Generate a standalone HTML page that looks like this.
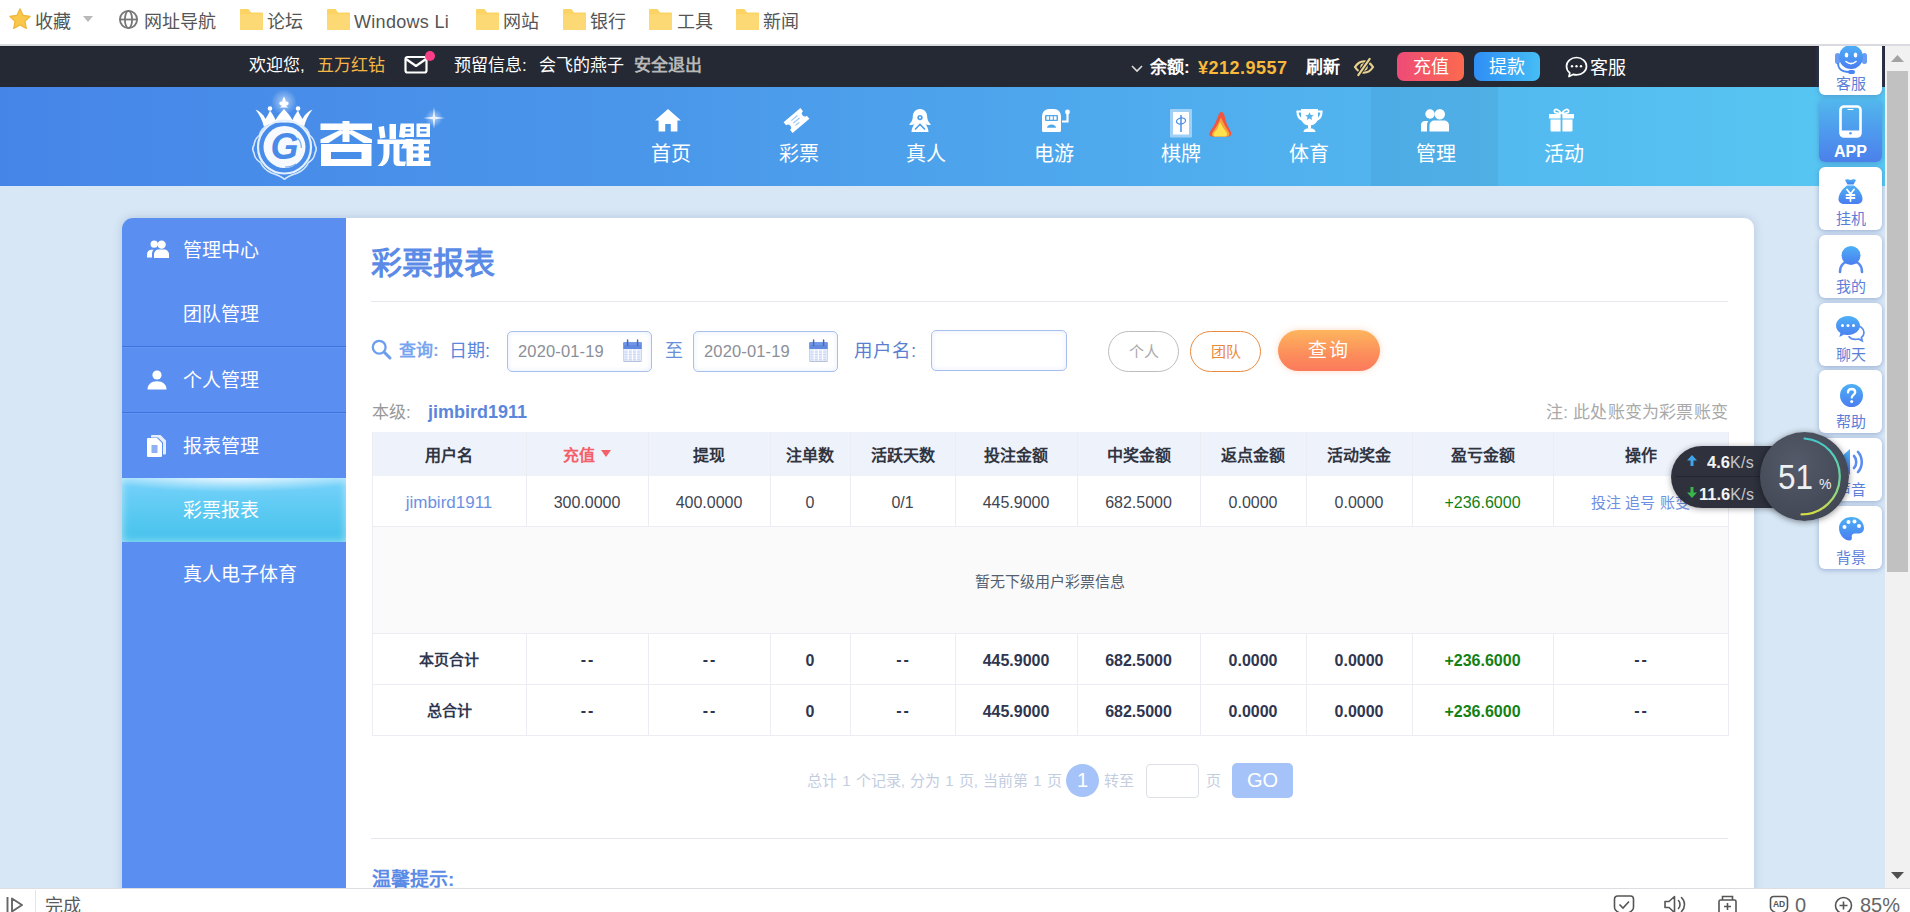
<!DOCTYPE html>
<html lang="zh-CN">
<head>
<meta charset="utf-8">
<title>彩票报表</title>
<style>
*{box-sizing:border-box;margin:0;padding:0}
html,body{width:1910px;height:912px;overflow:hidden;background:#fff}
body{position:relative;font-family:"Liberation Sans",sans-serif;color:#333;font-size:16px}
.a{position:absolute;white-space:nowrap;line-height:1}
svg{display:block;overflow:visible}
/* bookmark bar */
#bm{position:absolute;left:0;top:0;width:1910px;height:44px;background:#fff}
#bm .t{position:absolute;top:12px;font-size:18px;color:#555;line-height:20px;white-space:nowrap}
#bmline{position:absolute;left:0;top:44px;width:1910px;height:2px;background:#d9dbe0}
.fold{position:absolute;top:8px;width:23px;height:22px}
/* top dark bar */
#top{position:absolute;left:0;top:46px;width:1885px;height:41px;background:#252934;box-shadow:inset 0 1px 0 #1f212b}
#top .t{position:absolute;top:10px;font-size:17px;line-height:20px;color:#fff;white-space:nowrap}
/* header */
#hd{position:absolute;left:0;top:87px;width:1885px;height:99px;background:linear-gradient(90deg,#4685e8 0%,#4a97ea 35%,#51b2ee 70%,#57c8f2 100%)}
.nv{position:absolute;top:0;width:127px;height:99px;text-align:center}
.nv span{position:absolute;left:0;right:0;top:56px;font-size:20px;line-height:22px;color:#fff}
.nv svg{position:absolute;left:50%;top:20px;margin-left:-15px}
/* page */
#pg{position:absolute;left:0;top:186px;width:1885px;height:702px;background:#d7e7f5;overflow:hidden}
#side{position:absolute;left:122px;top:32px;width:224px;height:680px;background:#5b8ef1;border-radius:11px 0 0 0}
#side .t{position:absolute;left:61px;font-size:19px;line-height:22px;color:#fff;white-space:nowrap}
#side .ln{position:absolute;left:0;width:224px;height:1px;background:#3f70dc;box-shadow:0 1px 0 rgba(110,160,250,.5)}
#main{position:absolute;left:346px;top:32px;width:1408px;height:680px;background:#fff;border-radius:0 10px 0 0}
/* scrollbar */
#sb{position:absolute;left:1885px;top:46px;width:25px;height:842px;background:#f1f1f1}
#sb .th{position:absolute;left:2px;top:25px;width:21px;height:501px;background:#c1c1c1}
/* status bar */
#st{position:absolute;left:0;top:888px;width:1910px;height:24px;background:#fff;border-top:1px solid #dcdde0;overflow:hidden}

#act{background:radial-gradient(ellipse 60% 14px at 50% 0,rgba(255,255,255,.75),rgba(255,255,255,0) 100%),linear-gradient(180deg,#79d2fb 0%,#5fcbf3 45%,#45c2eb 100%);box-shadow:inset 0 0 8px rgba(255,255,255,.55)}
.inp{position:absolute;border:1px solid #a9bfec;border-radius:5px;background:#fff;box-shadow:inset 0 0 5px rgba(130,165,240,.22)}
.inp span{position:absolute;left:10px;top:10px;letter-spacing:.15px;font-size:16.500px;line-height:18px;color:#8b8f98}
.cal{position:absolute;left:115px;top:8px}
.pill{position:absolute;width:71px;height:41px;border:1px solid;border-radius:21px;font-size:15px;line-height:39px;text-align:center;background:#fff}
#qbtn{border-radius:21px;background:linear-gradient(180deg,#fdb55d 0%,#fc8d5b 60%,#fb7a5c 100%);color:#fff;font-size:19px;line-height:41px;text-align:center;letter-spacing:2px;text-indent:0;box-shadow:0 0 6px rgba(252,150,90,.35)}
.c{position:absolute;text-align:center;white-space:nowrap;font-size:16px;color:#3f4450;padding-top:2px}
.c.th{font-weight:bold;font-size:16px;color:#30343f;padding-top:2px}
.c.th.red{color:#f4606a}
.c.ts{font-weight:bold;font-size:16px;color:#2f3650}
.c.ts.cj{font-size:15px;padding-top:1px}
.dd{letter-spacing:2px;margin-right:-2px;position:relative;top:-1px}
.c.em{font-size:15px;color:#555e6e}
.tri{display:inline-block;width:0;height:0;border-left:5px solid transparent;border-right:5px solid transparent;border-top:7px solid #f4606a;margin-left:6px;vertical-align:4px}
.lk{color:#6d90e2;font-size:17px}
.lk2{color:#6d90e2;font-size:15px}
.gr{color:#138113}
.gl{position:absolute;background:#ebedf2}

#fp{position:absolute;left:1819px;top:46px;width:66px;height:540px;overflow:hidden}
#fp{left:1813px;width:76px;padding:0}
.fi{position:absolute;left:6px;width:63px;height:63px;border-radius:6px;background:#fff;box-shadow:0 1px 5px rgba(70,100,170,.45)}
.fi.app{background:linear-gradient(180deg,#52b8ec 0%,#4e98ee 55%,#4b80ea 100%)}
.fi svg{position:absolute}
.fi span{position:absolute;left:0;right:0;top:43px;text-align:center;font-size:15px;line-height:18px;color:#5b7fd8;white-space:nowrap}
#nw{position:absolute;left:1671px;top:432px;width:180px;height:90px}
#nw .pl{position:absolute;left:0;top:14px;width:140px;height:62px;border-radius:31px 0 0 31px;background:rgba(38,42,53,.96);box-shadow:0 1px 6px rgba(0,0,0,.35)}
#nw b{font-weight:normal;font-size:16px;color:#c4c6cb;letter-spacing:.3px}
#nw .cir{position:absolute;left:89px;top:0;width:89px;height:89px;border-radius:50%;background:radial-gradient(circle at 40% 35%,#545a69 0%,#474c5a 55%,#3d424f 100%);box-shadow:0 1px 6px rgba(0,0,0,.45)}
</style>
</head>
<body>
<!-- BOOKMARK BAR -->
<div id="bm">
  <svg class="a" style="left:8px;top:7px" width="24" height="24" viewBox="0 0 24 24"><path d="M12 1.8l3.1 6.6 7.1.9-5.2 5 1.3 7.1L12 18l-6.3 3.4 1.3-7.1-5.2-5 7.1-.9z" fill="#f9c84a" stroke="#f0b43a" stroke-width="1.2" stroke-linejoin="round"/></svg>
  <div class="t" style="left:35px">收藏</div>
  <svg class="a" style="left:83px;top:16px" width="10" height="6" viewBox="0 0 10 6"><path d="M0 0h10L5 6z" fill="#b9b9b9"/></svg>
  <svg class="a" style="left:118px;top:9px" width="21" height="21" viewBox="0 0 21 21" fill="none" stroke="#777" stroke-width="1.8"><circle cx="10.5" cy="10.5" r="8.6"/><ellipse cx="10.5" cy="10.5" rx="3.6" ry="8.6"/><path d="M2 10.5h17"/></svg>
  <div class="t" style="left:144px">网址导航</div>
  <svg class="fold" style="left:240px" viewBox="0 0 23 20" preserveAspectRatio="none"><path d="M0 2a1 1 0 0 1 1-1h7.5l2.5 3H22a1 1 0 0 1 1 1v14a1 1 0 0 1-1 1H1a1 1 0 0 1-1-1z" fill="#fbd465"/><path d="M0 6h23v13a1 1 0 0 1-1 1H1a1 1 0 0 1-1-1z" fill="#fdd976"/></svg>
  <div class="t" style="left:267px">论坛</div>
  <svg class="fold" style="left:327px" viewBox="0 0 23 20" preserveAspectRatio="none"><path d="M0 2a1 1 0 0 1 1-1h7.5l2.5 3H22a1 1 0 0 1 1 1v14a1 1 0 0 1-1 1H1a1 1 0 0 1-1-1z" fill="#fbd465"/><path d="M0 6h23v13a1 1 0 0 1-1 1H1a1 1 0 0 1-1-1z" fill="#fdd976"/></svg>
  <div class="t" style="left:354px;letter-spacing:.3px">Windows Li</div>
  <svg class="fold" style="left:476px" viewBox="0 0 23 20" preserveAspectRatio="none"><path d="M0 2a1 1 0 0 1 1-1h7.5l2.5 3H22a1 1 0 0 1 1 1v14a1 1 0 0 1-1 1H1a1 1 0 0 1-1-1z" fill="#fbd465"/><path d="M0 6h23v13a1 1 0 0 1-1 1H1a1 1 0 0 1-1-1z" fill="#fdd976"/></svg>
  <div class="t" style="left:503px">网站</div>
  <svg class="fold" style="left:563px" viewBox="0 0 23 20" preserveAspectRatio="none"><path d="M0 2a1 1 0 0 1 1-1h7.5l2.5 3H22a1 1 0 0 1 1 1v14a1 1 0 0 1-1 1H1a1 1 0 0 1-1-1z" fill="#fbd465"/><path d="M0 6h23v13a1 1 0 0 1-1 1H1a1 1 0 0 1-1-1z" fill="#fdd976"/></svg>
  <div class="t" style="left:590px">银行</div>
  <svg class="fold" style="left:649px" viewBox="0 0 23 20" preserveAspectRatio="none"><path d="M0 2a1 1 0 0 1 1-1h7.5l2.5 3H22a1 1 0 0 1 1 1v14a1 1 0 0 1-1 1H1a1 1 0 0 1-1-1z" fill="#fbd465"/><path d="M0 6h23v13a1 1 0 0 1-1 1H1a1 1 0 0 1-1-1z" fill="#fdd976"/></svg>
  <div class="t" style="left:677px">工具</div>
  <svg class="fold" style="left:736px" viewBox="0 0 23 20" preserveAspectRatio="none"><path d="M0 2a1 1 0 0 1 1-1h7.5l2.5 3H22a1 1 0 0 1 1 1v14a1 1 0 0 1-1 1H1a1 1 0 0 1-1-1z" fill="#fbd465"/><path d="M0 6h23v13a1 1 0 0 1-1 1H1a1 1 0 0 1-1-1z" fill="#fdd976"/></svg>
  <div class="t" style="left:763px">新闻</div>
</div>
<div id="bmline"></div>

<!-- TOP DARK BAR -->
<div id="top">
  <div class="t" style="left:249px">欢迎您,</div>
  <div class="t" style="left:317px;color:#f6b545">五万红钻</div>
  <svg class="a" style="left:404px;top:9px" width="25" height="20" viewBox="0 0 25 20" fill="none" stroke="#fff" stroke-width="2.2" stroke-linejoin="round"><rect x="1.5" y="2" width="21" height="15.5" rx="2"/><path d="M2 4l10 7 10-7"/></svg>
  <div class="a" style="left:425px;top:5px;width:10px;height:10px;border-radius:50%;background:#fb3f86"></div>
  <div class="t" style="left:454px">预留信息:</div>
  <div class="t" style="left:539px">会飞的燕子</div>
  <div class="t" style="left:634px;color:#b8b8b8;font-weight:bold">安全退出</div>
  <!-- right -->
  <svg class="a" style="left:1131px;top:19px" width="12" height="8" viewBox="0 0 12 8" fill="none" stroke="#ddd" stroke-width="1.6"><path d="M1 1l5 5 5-5"/></svg>
  <div class="t" style="left:1150px;font-weight:bold;top:12px">余额:</div>
  <div class="t" style="left:1198px;font-weight:bold;color:#f8b93c;font-size:18px;top:12px;letter-spacing:.5px">¥212.9557</div>
  <div class="t" style="left:1306px;font-weight:bold;top:12px">刷新</div>
  <svg class="a" style="left:1354px;top:12px" width="20" height="18" viewBox="0 0 21 19" fill="none" stroke="#e9d28e" stroke-width="2.300" stroke-linecap="round"><path d="M1 9.500C3.500 5.500 6.800 3.500 10.500 3.500s7 2 9.500 6c-2.500 4-5.800 6-9.500 6S3.500 13.500 1 9.500z"/><circle cx="10.500" cy="9.500" r="2.800"/><path d="M16.500 1L4.500 18" stroke="#252934" stroke-width="4.500"/><path d="M16.500 1L4.500 18"/></svg>
  <svg class="a" style="left:1565px;top:10px" width="23" height="22" viewBox="0 0 23 22" fill="none" stroke="#fff" stroke-width="1.700"><path d="M11.500 1.500c5.500 0 10 3.900 10 8.700s-4.500 8.700-10 8.700c-1.200 0-2.400-.2-3.500-.5L4 20.500l.8-3.600C2.800 15.300 1.500 12.900 1.500 10.200c0-4.800 4.500-8.700 10-8.700z" stroke-linejoin="round"/><circle cx="7" cy="10.200" r="1.200" fill="#fff" stroke="none"/><circle cx="11.500" cy="10.200" r="1.200" fill="#fff" stroke="none"/><circle cx="16" cy="10.200" r="1.200" fill="#fff" stroke="none"/></svg>
  <div class="a" id="btn1" style="left:1397px;top:6px;width:67px;height:29px;border-radius:7px;background:linear-gradient(90deg,#ee4b78,#fb6a4e);color:#fff;font-size:18px;line-height:31px;text-align:center">充值</div>
  <div class="a" id="btn2" style="left:1474px;top:6px;width:66px;height:29px;border-radius:7px;background:linear-gradient(90deg,#2f8ef5,#45bdf5);color:#fff;font-size:18px;line-height:31px;text-align:center">提款</div>
  <div class="t" style="left:1590px;font-size:18px;top:12px">客服</div>
</div>

<!-- HEADER -->
<div id="hd">
  <div class="a" style="left:1371px;top:0;width:127px;height:99px;background:rgba(10,30,80,.06)"></div>


  <!-- logo -->
  <svg class="a" style="left:240px;top:-1px" width="210" height="100" viewBox="0 0 210 100">
    <defs><radialGradient id="glow"><stop offset="0" stop-color="#fff" stop-opacity=".55"/><stop offset="1" stop-color="#fff" stop-opacity="0"/></radialGradient></defs>
    <circle cx="44" cy="16" r="13" fill="url(#glow)"/>
    <circle cx="194" cy="32" r="9" fill="url(#glow)"/>
    <path d="M194 21l1.200 9.800L205 32l-9.800 1.200L194 43l-1.200-9.800L183 32l9.800-1.200z" fill="#fff" opacity=".8"/>
    <!-- crown -->
    <path d="M44 10.500c1.200 2.300 1.800 4 1.800 5.200 1.300-.5 2.800.2 2.800 1.800 0 1.300-1.200 2.200-2.600 1.900.6 1 1.500 1.700 2.600 2.100h-9.200c1.100-.4 2-1.100 2.600-2.100-1.400.3-2.600-.6-2.600-1.900 0-1.600 1.500-2.300 2.800-1.800 0-1.200.6-2.900 1.800-5.200z" fill="#fff"/>
    <circle cx="30" cy="22.500" r="2.300" fill="#fff"/><circle cx="58" cy="22.500" r="2.300" fill="#fff"/>
    <path d="M15.500 23.500c4 1.500 8 5 10 9.500 1.500-2.500 3-5 4.500-8.500 2.500 3.500 4 6 5.500 9.500 2.500-4 5-7.500 8.500-11 3.500 3.500 6 7 8.500 11 1.500-3.500 3-6 5.500-9.500 1.500 3.500 3 6 4.500 8.500 2-4.500 6-8 10-9.500-4 5-7 11-8.500 17.500-3-2.500-10-4.500-20-4.500s-17 2-20 4.500C22.500 34.500 19.500 28.500 15.500 23.500z" fill="#fff"/>
    <!-- emblem -->
    <path d="M44.500 93.500c-3-3.500-8-4.500-13-6.500-5.500-2.500-9-6-11-10.500-3.500-2-6-5.500-6.500-9.500-1.500-2.500-1.500-5.500 0-8 .5-4 2.500-7.500 5.500-10 1-4 4-7.500 8-9.500M44.500 93.500c3-3.500 8-4.500 13-6.500 5.500-2.500 9-6 11-10.500 3.500-2 6-5.500 6.500-9.500 1.500-2.500 1.500-5.500 0-8-.5-4-2.500-7.500-5.500-10-1-4-4-7.500-8-9.500" fill="none" stroke="#d6e8fd" stroke-width="1.600"/>
    <circle cx="44.500" cy="61" r="26.500" fill="none" stroke="#e4f0ff" stroke-width="2.200"/>
    <circle cx="44.500" cy="61" r="21" fill="#f6faff"/>
    <text x="30.500" y="72.500" font-family="Liberation Sans, sans-serif" font-weight="bold" font-style="italic" font-size="36" fill="#4a8be8">G</text>
    <path d="M58 49c4 3 6.500 7.500 6 13-.5 5.500-3.500 10-8 13 2-3.500 2.500-6.500 2-9.500 1.500-2.500 2-5.500 1.500-8.500z" fill="#f6faff"/>
    <path d="M57.500 52c2.500 2.500 4 6 3.800 10M56 78c-3 2-7 3-11 3" stroke="#4a8be8" stroke-width="1.200" fill="none" opacity=".7"/>
    <!-- 杏 -->
    <g fill="#fff">
      <path d="M80.500 37.500h51.500v6.500H80.500z"/><path d="M102.500 35h7v21h-7z"/>
      <path d="M100 44l6 1.500-17.500 11.500h-8v-3.500z"/><path d="M112 44l-6 1.500 17.500 11.500h8.500v-3.500z"/>
      <path d="M81 58h50.500v22H81zM91 66v7h30.500v-7z" fill-rule="evenodd"/>
    </g>
    <!-- 耀 -->
    <g fill="#fff">
      <path d="M149.500 38h6.500v15h-6.500zM138.500 41l5.500-1 1.500 11.500-5.500 1zM166 40l-5.500-1-1.500 12 5.500 1z"/>
      <path d="M137.500 53.500h29v4.500h-29z"/>
      <path d="M143.500 58h6v8c0 7-2 11.500-7 14h-5c4.500-3.500 6-7.500 6-14zM153.500 58h6v15.500c0 1.500.5 2 2 2h4.500l-1 4.500h-6c-4 0-5.500-1.500-5.500-5.500z"/>
      <path d="M160.500 37.500h13.500v13.500h-13.500zM164 41v2h6.500v-2zM164 45.500v2h6.500v-2z" fill-rule="evenodd"/>
      <path d="M176.500 37.500h13.500v13.500h-13.500zM180 41v2h6.500v-2zM180 45.500v2h6.500v-2z" fill-rule="evenodd"/>
      <path d="M166 53l-5 9.500h5.500V80h6.500V53z"/>
      <path d="M171 53.500h19v4.500h-19zM171 60.500h18v4h-18zM171 67.500h18v4h-18zM171 75h19.500v5H171z"/>
      <path d="M178.500 55h5.500v23h-5.500z"/>
    </g>
  </svg>
  <!-- nav icons (page-y = 87 + top) -->
  <svg class="a" style="left:655px;top:22px" width="26" height="23" viewBox="0 0 26 23" fill="#fff"><path d="M13 0L0 11.500h3.600V22.500h6.600v-7.500h5.600v7.500h6.600V11.500H26z"/></svg>
  <svg class="a" style="left:785px;top:22px" width="23" height="23" viewBox="0 0 23 23"><g transform="rotate(-40 11.500 11.500)"><path d="M.5 4.500h22v4a2.600 2.600 0 0 0 0 6v4H.5v-4a2.600 2.600 0 0 0 0-6z" fill="#fff"/><path d="M7.500 8.300h8M7.500 11.500h8M7.500 14.700h5" stroke="#9ccaf5" stroke-width="1.200"/></g></svg>
  <svg class="a" style="left:909px;top:22px" width="22" height="23" viewBox="0 0 22 23"><path d="M11 0C6 0 3.800 4 3.800 8c0 3.500-1.800 5.500-3.800 7.500 2 .8 4 .6 5.500-.2C4 17 2.600 19.500 2.500 23h17c-.1-3.500-1.500-6-3-7.700 1.500.8 3.500 1 5.500.2-2-2-3.800-4-3.800-7.500 0-4-2.200-8-7.200-8z" fill="#fff"/><circle cx="11" cy="8.600" r="2.700" fill="#4ea0ec"/><path d="M6 20.500l5-5 5 5" stroke="#4ea0ec" stroke-width="1.600" fill="none"/><circle cx="11" cy="8.600" r="1" fill="#fff"/></svg>
  <svg class="a" style="left:1042px;top:22px" width="28" height="23" viewBox="0 0 28 23"><path d="M0 7a7 7 0 0 1 7-7h5a7 7 0 0 1 7 7v14.500a1.500 1.500 0 0 1-1.500 1.500h-16A1.500 1.500 0 0 1 0 21.500z" fill="#fff"/><rect x="3" y="6" width="13" height="6" rx="1" fill="#4fa8ec"/><path d="M4.500 7.200h2.600v3.600H4.500zM8.200 7.200h2.600v3.600H8.200zM11.900 7.200h2.600v3.600h-2.600z" fill="#fff"/><path d="M5 18.800c0-2 2-3.300 4.500-3.300s4.500 1.300 4.500 3.300z" fill="#4fa8ec"/><circle cx="25.500" cy="3" r="2.400" fill="#fff"/><path d="M25.500 4v8.500H20" stroke="#fff" stroke-width="2.200" fill="none"/></svg>
  <svg class="a" style="left:1170px;top:22px" width="23" height="29" viewBox="0 0 23 29"><rect x="0" y="0" width="22" height="28.500" rx="1" fill="#9fd0f6"/><rect x="3" y="3" width="16" height="22.500" rx=".5" fill="#fff"/><path d="M11 6v17" stroke="#4b8fe8" stroke-width="1.500"/><ellipse cx="11" cy="12" rx="4.600" ry="3" fill="none" stroke="#4b8fe8" stroke-width="1.300" transform="rotate(-12 11 12)"/></svg>
  <svg class="a" style="left:1209px;top:25px" width="23" height="25" viewBox="0 0 24 27"><path d="M13 0c1.500 0 2.500 1.200 3 3l2.500 9c1 3.500 3 6 4.500 9 1.500 3.200 0 5.500-3 5.500H3.500c-3 0-4.500-2.200-2.800-5.200C3 17.500 5.500 14 7 10.500L10 3c.5-1.800 1.500-3 3-3z" fill="#f2553f"/><path d="M12.500 6c1.500 3 3 6 4.500 9 1.500 2.800 3.500 5 4.500 7.500 1 2.600-.5 4-2.500 4H5.500c-2.500 0-3.500-1.500-2.500-3.700C4.500 19.500 7 17 8.500 14z" fill="#f7a03c"/><path d="M11.500 11c1 2.500 2.500 4 3.500 6 1.500 2.500 4 4.500 4 7 0 1.800-1 2.500-2.500 2.500H7c-2 0-3-.8-2.500-2.800C5 21.500 7.500 20 8.500 18z" fill="#fbe24e"/></svg>
  <svg class="a" style="left:1296px;top:22px" width="27" height="23" viewBox="0 0 27 23"><path d="M5 0h17v8.500c0 4.700-3.800 8-8.500 8S5 13.200 5 8.500z" fill="#fff"/><path d="M5.500 2.500H1.500c0 4.500 2 7.500 5.500 8.500M21.500 2.500h4c0 4.500-2 7.500-5.500 8.500" stroke="#fff" stroke-width="2.200" fill="none"/><path d="M12 15h3v4.500h-3z" fill="#fff"/><path d="M7.500 23c0-2.300 2.500-3.800 6-3.800s6 1.500 6 3.800z" fill="#fff"/><path d="M13.500 3.200l1.300 2.700 2.900.3-2.200 2 .6 2.900-2.600-1.500-2.600 1.500.6-2.900-2.200-2 2.900-.3z" fill="#56b4ee"/></svg>
  <svg class="a" style="left:1421px;top:22px" width="28" height="23" viewBox="0 0 28 23" fill="#fff"><circle cx="9" cy="5" r="4.700"/><circle cx="18.800" cy="5.200" r="5.200"/><path d="M0 22.500v-6.500c0-2.500 1.800-4 4-4h3.200c-.8 1.200-1.200 2.600-1.200 4.200v6.300z"/><path d="M8.500 22.500v-6c0-3 2.200-5 5-5H23c2.800 0 5 2 5 5v6z"/></svg>
  <svg class="a" style="left:1549px;top:21px" width="25" height="24" viewBox="0 0 25 24"><path d="M12.200 5.500C10 1.500 6.500.5 5.500 2.500S7.500 5.500 12.200 5.500zM12.800 5.500C15 1.500 18.500.5 19.500 2.500S17.500 5.500 12.800 5.500z" fill="none" stroke="#fff" stroke-width="1.700"/><path d="M0 6h11.600v4.500H0zM13.400 6H25v4.500H13.400zM1.500 11.500h10.100V23.500H2.500a1 1 0 0 1-1-1zM13.400 11.500h10.100v11a1 1 0 0 1-1 1h-9.100z" fill="#fff"/></svg>
  <div class="nv" style="left:607px"><span>首页</span></div>
  <div class="nv" style="left:735px"><span>彩票</span></div>
  <div class="nv" style="left:862px"><span>真人</span></div>
  <div class="nv" style="left:990px"><span>电游</span></div>
  <div class="nv" style="left:1117px"><span>棋牌</span></div>
  <div class="nv" style="left:1245px"><span>体育</span></div>
  <div class="nv" style="left:1372px"><span>管理</span></div>
  <div class="nv" style="left:1500px"><span>活动</span></div>
</div>

<!-- PAGE -->
<div id="pg">
  <div class="a" style="left:122px;top:32px;width:1632px;height:680px;border-radius:11px 10px 0 0;box-shadow:0 0 10px rgba(105,130,170,.32)"></div>
  <div id="side">
    <svg class="a" style="left:25px;top:22px" width="22" height="19" viewBox="0 0 22 19" fill="#fff"><circle cx="7.2" cy="4.2" r="3.6"/><circle cx="14.6" cy="4.6" r="4.2"/><path d="M0 17.5v-3.2c0-2.6 2-4.6 4.6-4.6h1.8c-1 1.2-1.4 2.6-1.4 4.2v3.6z"/><path d="M7 18v-3.6c0-2.9 2.2-5 5-5h5c2.800 0 5 2.100 5 5V18z"/></svg>
    <div class="t" style="top:22px">管理中心</div>
    <div class="t" style="top:86px">团队管理</div>
    <div class="ln" style="top:128px"></div>
    <svg class="a" style="left:25px;top:152px" width="20" height="20" viewBox="0 0 20 20" fill="#fff"><circle cx="10" cy="5" r="4.600"/><path d="M0.500 19.500c0-5.200 3.800-8.300 9.500-8.300s9.500 3.100 9.500 8.300z"/></svg>
    <div class="t" style="top:152px">个人管理</div>
    <div class="ln" style="top:194px"></div>
    <svg class="a" style="left:25px;top:217px" width="19" height="22" viewBox="0 0 19 22"><path d="M5 0h8.500l5.500 5.500v13a1 1 0 0 1-1 1h-2V7.500L11 2.500H4V1a1 1 0 0 1 1-1z" fill="#e6eefc"/><path d="M1 3h9l5 5v13a1 1 0 0 1-1 1H1a1 1 0 0 1-1-1V4a1 1 0 0 1 1-1z" fill="#fff"/><rect x="4.500" y="10" width="6" height="8" fill="#8fb0f3"/></svg>
    <div class="t" style="top:218px">报表管理</div>
    <div class="a" id="act" style="left:0;top:260px;width:224px;height:64px"></div>
    <div class="t" style="top:282px">彩票报表</div>
    <div class="t" style="top:346px">真人电子体育</div>
  </div>
  <div id="main">
    <div class="a" style="left:25px;top:30px;font-size:31px;line-height:32px;font-weight:bold;color:#5b8be6">彩票报表</div>
    <div class="a" style="left:25px;top:83px;width:1357px;height:1px;background:#e4e7ee"></div>
    <!-- search row -->
    <svg class="a" style="left:25px;top:121px" width="21" height="21" viewBox="0 0 21 21" fill="none" stroke="#6d9def" stroke-width="2.300" stroke-linecap="round"><circle cx="8.200" cy="8.200" r="6.400"/><path d="M13.400 13.400l5.600 5.600" stroke-width="3"/></svg>
    <div class="a" style="left:53px;top:123px;font-size:17px;line-height:20px;color:#78a6ee;font-weight:bold">查询:</div>
    <div class="a" style="left:103px;top:123px;font-size:18px;line-height:20px;color:#5b86dc">日期:</div>
    <div class="inp" style="left:161px;top:113px;width:145px;height:41px"><span>2020-01-19</span><svg class="cal" width="19" height="22" viewBox="0 0 19 22"><rect x=".5" y="2.500" width="18" height="19" rx="1" fill="#e4ebfb" stroke="#c3cee8" stroke-width=".8"/><path d="M.3 3.300a1 1 0 0 1 1-1h16.400a1 1 0 0 1 1 1V9H.3z" fill="#6189e0"/><path d="M.3 3.300a1 1 0 0 1 1-1h16.400a1 1 0 0 1 1 1V5H.3z" fill="#7097ea"/><path d="M5.300 9.500v11.500M9.500 9.500v11.500M13.700 9.500v11.500" stroke="#fff" stroke-width="1.100"/><path d="M1.500 12h16M1.500 14.500h16M1.500 17h16M1.500 19.400h16" stroke="#c6d3f3" stroke-width=".9" stroke-dasharray="2.800 1.400"/><path d="M4.600 0v5.500M14.600 0v5.500" stroke="#4f69a8" stroke-width="1.500" stroke-linecap="round"/><path d="M.5 21.300h18" stroke="#aebbd9" stroke-width=".9"/></svg></div>
    <div class="a" style="left:319px;top:123px;font-size:18px;line-height:20px;color:#6a8fd8">至</div>
    <div class="inp" style="left:347px;top:113px;width:145px;height:41px"><span>2020-01-19</span><svg class="cal" width="19" height="22" viewBox="0 0 19 22"><rect x=".5" y="2.500" width="18" height="19" rx="1" fill="#e4ebfb" stroke="#c3cee8" stroke-width=".8"/><path d="M.3 3.300a1 1 0 0 1 1-1h16.400a1 1 0 0 1 1 1V9H.3z" fill="#6189e0"/><path d="M.3 3.300a1 1 0 0 1 1-1h16.400a1 1 0 0 1 1 1V5H.3z" fill="#7097ea"/><path d="M5.300 9.500v11.500M9.500 9.500v11.500M13.700 9.500v11.500" stroke="#fff" stroke-width="1.100"/><path d="M1.500 12h16M1.500 14.500h16M1.500 17h16M1.500 19.400h16" stroke="#c6d3f3" stroke-width=".9" stroke-dasharray="2.800 1.400"/><path d="M4.600 0v5.500M14.600 0v5.500" stroke="#4f69a8" stroke-width="1.500" stroke-linecap="round"/><path d="M.5 21.300h18" stroke="#aebbd9" stroke-width=".9"/></svg></div>
    <div class="a" style="left:508px;top:123px;font-size:18.500px;line-height:20px;color:#5b7fd0">用户名:</div>
    <div class="inp" style="left:585px;top:112px;width:136px;height:41px"></div>
    <div class="pill" style="left:762px;top:113px;border-color:#bdbdbd;color:#aaa">个人</div>
    <div class="pill" style="left:844px;top:113px;border-color:#ea8a3e;color:#ea8a3e">团队</div>
    <div class="a" id="qbtn" style="left:932px;top:112px;width:102px;height:41px">查询</div>
    <!-- level row -->
    <div class="a" style="left:26px;top:185px;font-size:17px;line-height:20px;color:#999">本级:</div>
    <div class="a" style="left:82px;top:184px;font-size:18px;line-height:20px;color:#5b86dc;font-weight:bold">jimbird1911</div>
    <div class="a" style="right:26px;top:185px;font-size:17px;line-height:20px;color:#a9a9a9;letter-spacing:.2px">注: 此处账变为彩票账变</div>
    <!-- table -->
<div class="a" style="left:26px;top:214px;width:1356px;height:44px;background:#eef2fb"></div>
<div class="a" style="left:26px;top:308px;width:1356px;height:107px;background:#fafafa"></div>
<div class="c th" style="left:26px;top:214px;width:154px;height:44px;line-height:44px">用户名</div>
<div class="c th red" style="left:180px;top:214px;width:122px;height:44px;line-height:44px">充值<i class="tri"></i></div>
<div class="c th" style="left:302px;top:214px;width:122px;height:44px;line-height:44px">提现</div>
<div class="c th" style="left:424px;top:214px;width:80px;height:44px;line-height:44px">注单数</div>
<div class="c th" style="left:504px;top:214px;width:105px;height:44px;line-height:44px">活跃天数</div>
<div class="c th" style="left:609px;top:214px;width:122px;height:44px;line-height:44px">投注金额</div>
<div class="c th" style="left:731px;top:214px;width:123px;height:44px;line-height:44px">中奖金额</div>
<div class="c th" style="left:854px;top:214px;width:106px;height:44px;line-height:44px">返点金额</div>
<div class="c th" style="left:960px;top:214px;width:106px;height:44px;line-height:44px">活动奖金</div>
<div class="c th" style="left:1066px;top:214px;width:141px;height:44px;line-height:44px">盈亏金额</div>
<div class="c th" style="left:1207px;top:214px;width:175px;height:44px;line-height:44px">操作</div>
<div class="c td" style="left:26px;top:258px;width:154px;height:50px;line-height:50px"><span class="lk">jimbird1911</span></div>
<div class="c td" style="left:180px;top:258px;width:122px;height:50px;line-height:50px">300.0000</div>
<div class="c td" style="left:302px;top:258px;width:122px;height:50px;line-height:50px">400.0000</div>
<div class="c td" style="left:424px;top:258px;width:80px;height:50px;line-height:50px">0</div>
<div class="c td" style="left:504px;top:258px;width:105px;height:50px;line-height:50px">0/1</div>
<div class="c td" style="left:609px;top:258px;width:122px;height:50px;line-height:50px">445.9000</div>
<div class="c td" style="left:731px;top:258px;width:123px;height:50px;line-height:50px">682.5000</div>
<div class="c td" style="left:854px;top:258px;width:106px;height:50px;line-height:50px">0.0000</div>
<div class="c td" style="left:960px;top:258px;width:106px;height:50px;line-height:50px">0.0000</div>
<div class="c td" style="left:1066px;top:258px;width:141px;height:50px;line-height:50px"><span class="gr">+236.6000</span></div>
<div class="c td" style="left:1207px;top:258px;width:175px;height:50px;line-height:50px"><span class="lk2">投注 追号 账变</span></div>
<div class="c ts cj" style="left:26px;top:415px;width:154px;height:51px;line-height:51px">本页合计</div>
<div class="c ts" style="left:180px;top:415px;width:122px;height:51px;line-height:51px"><span class="dd">--</span></div>
<div class="c ts" style="left:302px;top:415px;width:122px;height:51px;line-height:51px"><span class="dd">--</span></div>
<div class="c ts" style="left:424px;top:415px;width:80px;height:51px;line-height:51px">0</div>
<div class="c ts" style="left:504px;top:415px;width:105px;height:51px;line-height:51px"><span class="dd">--</span></div>
<div class="c ts" style="left:609px;top:415px;width:122px;height:51px;line-height:51px">445.9000</div>
<div class="c ts" style="left:731px;top:415px;width:123px;height:51px;line-height:51px">682.5000</div>
<div class="c ts" style="left:854px;top:415px;width:106px;height:51px;line-height:51px">0.0000</div>
<div class="c ts" style="left:960px;top:415px;width:106px;height:51px;line-height:51px">0.0000</div>
<div class="c ts" style="left:1066px;top:415px;width:141px;height:51px;line-height:51px"><span class="gr">+236.6000</span></div>
<div class="c ts" style="left:1207px;top:415px;width:175px;height:51px;line-height:51px"><span class="dd">--</span></div>
<div class="c ts cj" style="left:26px;top:466px;width:154px;height:51px;line-height:51px">总合计</div>
<div class="c ts" style="left:180px;top:466px;width:122px;height:51px;line-height:51px"><span class="dd">--</span></div>
<div class="c ts" style="left:302px;top:466px;width:122px;height:51px;line-height:51px"><span class="dd">--</span></div>
<div class="c ts" style="left:424px;top:466px;width:80px;height:51px;line-height:51px">0</div>
<div class="c ts" style="left:504px;top:466px;width:105px;height:51px;line-height:51px"><span class="dd">--</span></div>
<div class="c ts" style="left:609px;top:466px;width:122px;height:51px;line-height:51px">445.9000</div>
<div class="c ts" style="left:731px;top:466px;width:123px;height:51px;line-height:51px">682.5000</div>
<div class="c ts" style="left:854px;top:466px;width:106px;height:51px;line-height:51px">0.0000</div>
<div class="c ts" style="left:960px;top:466px;width:106px;height:51px;line-height:51px">0.0000</div>
<div class="c ts" style="left:1066px;top:466px;width:141px;height:51px;line-height:51px"><span class="gr">+236.6000</span></div>
<div class="c ts" style="left:1207px;top:466px;width:175px;height:51px;line-height:51px"><span class="dd">--</span></div>
<div class="c em" style="left:26px;top:308px;width:1356px;height:107px;line-height:107px">暂无下级用户彩票信息</div>
<div class="gl" style="left:26px;top:308px;width:1356px;height:1px"></div>
<div class="gl" style="left:26px;top:415px;width:1356px;height:1px"></div>
<div class="gl" style="left:26px;top:466px;width:1356px;height:1px"></div>
<div class="gl" style="left:26px;top:517px;width:1356px;height:1px"></div>
<div class="gl" style="left:26px;top:214px;width:1px;height:304px"></div>
<div class="gl" style="left:180px;top:214px;width:1px;height:94px"></div>
<div class="gl" style="left:180px;top:415px;width:1px;height:102px"></div>
<div class="gl" style="left:302px;top:214px;width:1px;height:94px"></div>
<div class="gl" style="left:302px;top:415px;width:1px;height:102px"></div>
<div class="gl" style="left:424px;top:214px;width:1px;height:94px"></div>
<div class="gl" style="left:424px;top:415px;width:1px;height:102px"></div>
<div class="gl" style="left:504px;top:214px;width:1px;height:94px"></div>
<div class="gl" style="left:504px;top:415px;width:1px;height:102px"></div>
<div class="gl" style="left:609px;top:214px;width:1px;height:94px"></div>
<div class="gl" style="left:609px;top:415px;width:1px;height:102px"></div>
<div class="gl" style="left:731px;top:214px;width:1px;height:94px"></div>
<div class="gl" style="left:731px;top:415px;width:1px;height:102px"></div>
<div class="gl" style="left:854px;top:214px;width:1px;height:94px"></div>
<div class="gl" style="left:854px;top:415px;width:1px;height:102px"></div>
<div class="gl" style="left:960px;top:214px;width:1px;height:94px"></div>
<div class="gl" style="left:960px;top:415px;width:1px;height:102px"></div>
<div class="gl" style="left:1066px;top:214px;width:1px;height:94px"></div>
<div class="gl" style="left:1066px;top:415px;width:1px;height:102px"></div>
<div class="gl" style="left:1207px;top:214px;width:1px;height:94px"></div>
<div class="gl" style="left:1207px;top:415px;width:1px;height:102px"></div>
<div class="gl" style="left:1382px;top:214px;width:1px;height:304px"></div>
    <!-- pagination -->
    <div class="a" style="left:461px;top:554px;font-size:15px;line-height:18px;color:#c3cde0;word-spacing:1px">总计 1 个记录, 分为 1 页, 当前第 1 页</div>
    <div class="a" style="left:720px;top:546px;width:33px;height:33px;border-radius:50%;background:#a5c3f8;color:#fff;font-size:20px;line-height:33px;text-align:center">1</div>
    <div class="a" style="left:758px;top:554px;font-size:15px;line-height:18px;color:#c3cde0">转至</div>
    <div class="a" style="left:800px;top:546px;width:53px;height:34px;border:1px solid #dcdfe6;border-radius:4px;background:#fff"></div>
    <div class="a" style="left:860px;top:554px;font-size:15px;line-height:18px;color:#c3cde0">页</div>
    <div class="a" style="left:886px;top:545px;width:61px;height:35px;border-radius:5px;background:#a5c3f8;color:#fff;font-size:20px;line-height:35px;text-align:center">GO</div>
    <div class="a" style="left:25px;top:620px;width:1357px;height:1px;background:#e4e7ee"></div>
    <div class="a" style="left:26px;top:651px;font-size:19px;line-height:22px;font-weight:bold;color:#5b8be6">温馨提示:</div>
  </div>
</div>


<!-- RIGHT FLOAT PANEL -->
<div id="fp">
  <svg width="0" height="0" style="position:absolute"><defs>
    <linearGradient id="bg1" x1="0" y1="0" x2="0" y2="1"><stop offset="0" stop-color="#4db0f6"/><stop offset="1" stop-color="#4a7df0"/></linearGradient>
    <linearGradient id="arc1" x1="0" y1="0" x2="0" y2="1"><stop offset="0" stop-color="#45c9c9"/><stop offset=".55" stop-color="#6fd39a"/><stop offset="1" stop-color="#d4dc45"/></linearGradient>
  </defs></svg>
  <div class="fi" style="top:-14px">
    <svg style="left:15px;top:11px" width="34" height="32" viewBox="0 0 34 32"><rect x="1" y="10" width="5" height="11" rx="2.500" fill="#6a9cf3"/><rect x="28" y="10" width="5" height="11" rx="2.500" fill="#6a9cf3"/><circle cx="17" cy="14" r="12" fill="url(#bg1)"/><ellipse cx="12.500" cy="12" rx="1.800" ry="2.600" fill="#fff"/><ellipse cx="21.500" cy="12" rx="1.800" ry="2.600" fill="#fff"/><path d="M12 18.500c3 2.600 7 2.600 10 0" stroke="#fff" stroke-width="1.600" fill="none" stroke-linecap="round"/><path d="M4 20c0 6 4 9 11 9" stroke="#4a86f0" stroke-width="1.800" fill="none"/><rect x="14" y="27" width="7" height="4" rx="2" fill="#4a86f0"/></svg>
    <span>客服</span></div>
  <div class="fi app" style="top:53px">
    <svg style="left:20px;top:6px" width="23" height="33" viewBox="0 0 23 33" fill="none"><rect x="1.500" y="1.500" width="20" height="30" rx="3.500" stroke="#fff" stroke-width="2.600"/><path d="M2 25.500h19v4.500a1.500 1.500 0 0 1-1.500 1.500h-16a1.500 1.500 0 0 1-1.500-1.500z" fill="#fff"/><circle cx="11.500" cy="28.300" r="1.300" fill="#5b9cf0"/><path d="M9 4.500h5" stroke="#fff" stroke-width="1.200" stroke-linecap="round"/></svg>
    <span style="color:#fff;font-weight:bold;font-size:16px;top:44px">APP</span></div>
  <div class="fi" style="top:121px">
    <svg style="left:18px;top:11px" width="27" height="27" viewBox="0 0 27 27"><path d="M8 2c2-1.500 4 0 5.500 0S17 .5 19 2l-2.500 4.500h-6z" fill="url(#bg1)"/><path d="M10 7.500h7c5 3.500 8.500 9 8.500 13.500 0 3.500-2.500 5-6 5h-12c-3.500 0-6-1.500-6-5 0-4.500 3.500-10 8.500-13.500z" fill="url(#bg1)"/><path d="M10 11.500l3.500 4.500 3.500-4.500M9.500 17h8M9.500 20h8M13.500 16v7" stroke="#fff" stroke-width="1.800" fill="none" stroke-linecap="round"/></svg>
    <span>挂机</span></div>
  <div class="fi" style="top:189px">
    <svg style="left:19px;top:10px" width="26" height="28" viewBox="0 0 26 28"><path d="M2 27c0-7 4.500-11 11-11s11 4 11 11" stroke="#5b8cf0" stroke-width="2.600" fill="none" stroke-linecap="round"/><circle cx="13" cy="10.500" r="9.500" fill="url(#bg1)"/></svg>
    <span>我的</span></div>
  <div class="fi" style="top:257px">
    <svg style="left:17px;top:13px" width="30" height="26" viewBox="0 0 30 26"><path d="M19 9c5 .5 9 3.500 9 7.500 0 2-1 3.800-2.600 5l.8 3.300-3.600-1.800c-4 .9-8-.2-10-2.800" fill="none" stroke="#5b8cf0" stroke-width="1.700"/><path d="M12 0C5.400 0 0 4.300 0 9.600c0 3 1.700 5.600 4.400 7.400l-1 4 4.600-2.500c1.300.4 2.600.6 4 .6 6.600 0 12-4.300 12-9.500S18.600 0 12 0z" fill="url(#bg1)"/><circle cx="6.500" cy="9.500" r="1.500" fill="#fff"/><circle cx="12" cy="9.500" r="1.500" fill="#fff"/><circle cx="17.500" cy="9.500" r="1.500" fill="#fff"/></svg>
    <span>聊天</span></div>
  <div class="fi" style="top:324px">
    <svg style="left:21px;top:14px" width="23" height="23" viewBox="0 0 23 23"><circle cx="11.500" cy="11.500" r="11.500" fill="url(#bg1)"/><path d="M8 8.600c0-2.200 1.500-3.600 3.600-3.600s3.600 1.300 3.600 3.200c0 2.600-3.400 2.800-3.400 5.300" stroke="#fff" stroke-width="2.300" fill="none" stroke-linecap="round"/><circle cx="11.700" cy="17.600" r="1.500" fill="#fff"/></svg>
    <span>帮助</span></div>
  <div class="fi" style="top:392px">
    <svg style="left:16px;top:10px" width="30" height="28" viewBox="0 0 30 28"><path d="M0 9h6l9-8v26l-9-8H0z" fill="url(#bg1)"/><path d="M19 8c3 3 3 9 0 12M23 4c5 5.500 5 14.500 0 20" stroke="#5b8cf0" stroke-width="2.600" fill="none" stroke-linecap="round"/></svg>
    <span>声音</span></div>
  <div class="fi" style="top:460px">
    <svg style="left:20px;top:11px" width="25" height="24" viewBox="0 0 25 24"><path d="M12.500 0C5.600 0 0 4.900 0 11c0 6.500 5 12.500 10.500 12.500 2 0 2.700-1.400 2.300-3.200-.5-2.300.8-3.800 3.200-3.800h3.500c3.300 0 5.500-2.200 5.500-5.500C25 4.900 19.400 0 12.500 0z" fill="url(#bg1)"/><circle cx="5.500" cy="10" r="2" fill="#fff"/><circle cx="9.500" cy="5" r="2" fill="#fff"/><circle cx="15.500" cy="4.500" r="2" fill="#fff"/><circle cx="20" cy="9" r="2" fill="#fff"/></svg>
    <span>背景</span></div>
</div>

<!-- NET SPEED WIDGET -->
<div id="nw">
  <div class="pl"></div>
  <div class="a" style="left:4px;top:44px;width:90px;height:1px;background:rgba(0,0,0,.22)"></div>
  <svg class="a" style="left:16px;top:23px" width="10" height="11" viewBox="0 0 10 11"><path d="M5 0l5 5.500H6.500V11h-3V5.500H0z" fill="#3ea6ea"/></svg>
  <div class="a" style="left:36px;top:21px;font-size:16.500px;line-height:18px;color:#f4f4f4;font-weight:bold">4.6<b>K/s</b></div>
  <svg class="a" style="left:16px;top:55px" width="10" height="11" viewBox="0 0 10 11"><path d="M5 11l5-5.500H6.500V0h-3v5.500H0z" fill="#36b64b"/></svg>
  <div class="a" style="left:28px;top:53px;font-size:16.500px;line-height:18px;color:#f4f4f4;font-weight:bold">11.6<b>K/s</b></div>
  <div class="cir">
    <svg class="a" style="left:0;top:0" width="89" height="89" viewBox="0 0 89 89"><path d="M44.500 6.500A38 38 0 0 1 41.500 82.400" stroke="url(#arc1)" stroke-width="2.200" fill="none" stroke-linecap="round"/></svg>
    <div class="a" style="left:18px;top:27px;font-size:35px;line-height:36px;color:#eef0f3;transform:scaleX(.9);transform-origin:0 0;letter-spacing:0">51</div>
    <div class="a" style="left:59px;top:44px;font-size:14px;line-height:16px;color:#eef0f3">%</div>
  </div>
</div>

<!-- SCROLLBAR -->
<div id="sb">
  <svg class="a" style="left:6px;top:9px" width="13" height="7" viewBox="0 0 13 7"><path d="M0 7L6.5 0 13 7z" fill="#a3a3a3"/></svg>
  <div class="th"></div>
  <svg class="a" style="left:6px;top:826px" width="13" height="7" viewBox="0 0 13 7"><path d="M0 0h13L6.5 7z" fill="#505050"/></svg>
</div>

<!-- STATUS BAR -->
<div id="st">
  <svg class="a" style="left:6px;top:8px" width="18" height="16" viewBox="0 0 18 16" fill="none" stroke="#666" stroke-width="1.900"><path d="M1.500 0v16M6 1.500l10 6.500-10 6.500z" stroke-linejoin="round"/></svg>
  <div class="a" style="left:35px;top:1px;width:1px;height:24px;background:#e6e6e6"></div>
  <div class="a" style="left:45px;top:8px;font-size:18px;color:#5a5a5a">完成</div>
  <svg class="a" style="left:1613px;top:6px" width="22" height="20" viewBox="0 0 22 20" fill="none" stroke="#555" stroke-width="1.600"><path d="M1.500 4a3 3 0 0 1 3-3h13a3 3 0 0 1 3 3v8.500c0 3.500-4.500 5.500-9.500 7-5-1.500-9.500-3.500-9.500-7z"/><path d="M6.500 9.500l3.500 3.500 6-6.500"/></svg>
  <svg class="a" style="left:1664px;top:6px" width="23" height="19" viewBox="0 0 23 19" fill="none" stroke="#555" stroke-width="1.600"><path d="M1 6.500h4l5.500-5v16l-5.500-5H1z" stroke-linejoin="round"/><path d="M14.500 5.500c2 2 2 6 0 8M17.500 2.500c4 4 4 10 0 14" stroke-linecap="round"/></svg>
  <svg class="a" style="left:1718px;top:6px" width="19" height="19" viewBox="0 0 19 19" fill="none" stroke="#555" stroke-width="1.600"><path d="M4.500 5V1.500h10V5"/><rect x="1" y="5" width="17" height="13" rx="1.500"/><path d="M9.500 8v7M6 11.500h7"/></svg>
  <svg class="a" style="left:1769px;top:6px" width="20" height="20" viewBox="0 0 20 20" fill="none" stroke="#555" stroke-width="1.600"><path d="M1.500 4.500a3 3 0 0 1 3-3h11a3 3 0 0 1 3 3v8c0 3.500-4 5-8.500 6.500-4.500-1.500-8.500-3-8.500-6.500z"/></svg>
  <div class="a" style="left:1773px;top:11px;font-size:8.500px;color:#555;font-weight:bold;letter-spacing:-.2px">AD</div>
  <div class="a" style="left:1795px;top:6px;font-size:20px;color:#666">0</div>
  <svg class="a" style="left:1834px;top:7px" width="19" height="19" viewBox="0 0 19 19" fill="none" stroke="#555" stroke-width="1.600"><circle cx="9.500" cy="9.500" r="8"/><path d="M9.500 5.500v8M5.500 9.500h8"/></svg>
  <div class="a" style="left:1860px;top:6px;font-size:20px;color:#666">85%</div>
</div>
</body>
</html>
